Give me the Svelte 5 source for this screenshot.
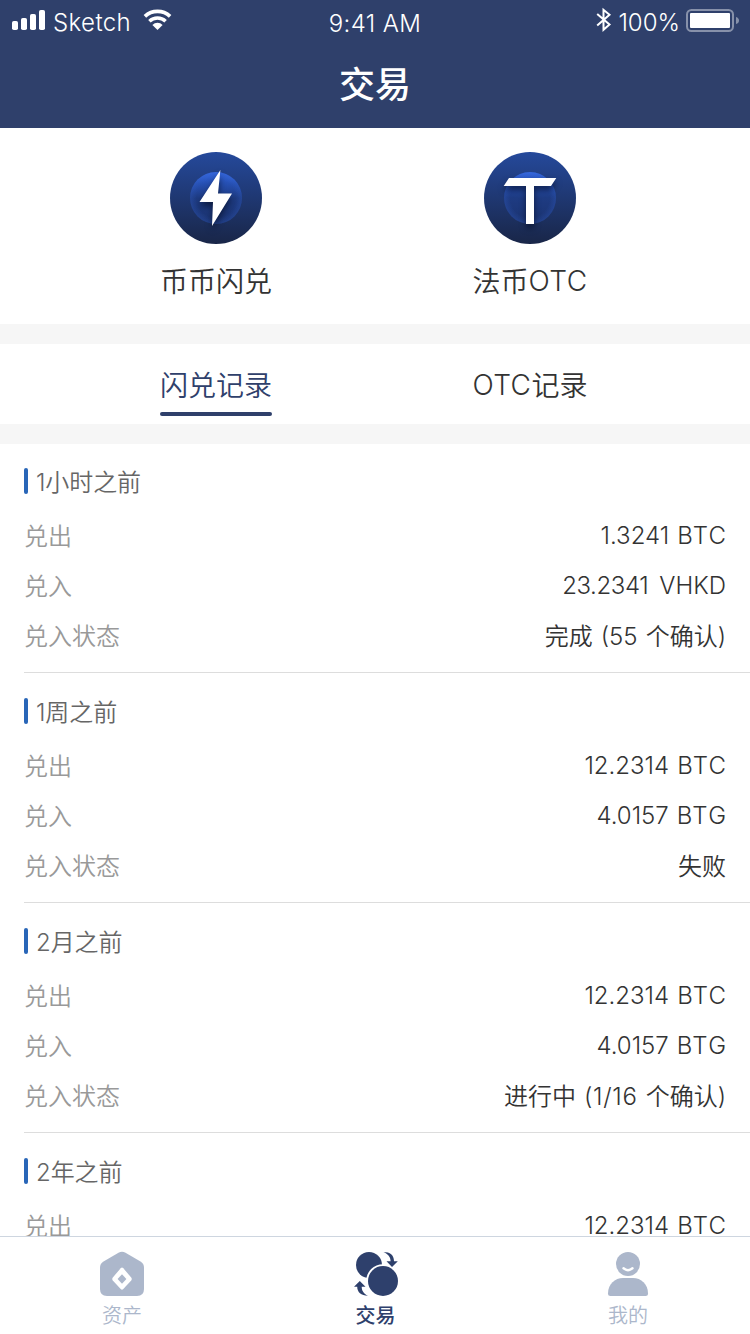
<script>
  const records = [
    { time: '1小时之前', rows: [['兑出', '1.3241', 'BTC'], ['兑入', '23.2341', 'VHKD'], ['兑入状态', '完成 (55 个确认)']] },
    { time: '1周之前', rows: [['兑出', '12.2314', 'BTC'], ['兑入', '4.0157', 'BTG'], ['兑入状态', '失败']] },
    { time: '2月之前', rows: [['兑出', '12.2314', 'BTC'], ['兑入', '4.0157', 'BTG'], ['兑入状态', '进行中 (1/16 个确认)']] },
    { time: '2年之前', rows: [['兑出', '12.2314', 'BTC']] }
  ];
</script>

<div class="screen">
  <header>
    <div class="status">
      <div class="carrier">
        <svg width="34" height="22" viewBox="0 0 34 22" fill="#fff">
          <rect x="0" y="12" width="6" height="9" rx="1.8" /><rect x="9" y="9" width="6" height="12" rx="1.8" />
          <rect x="18" y="5" width="6" height="16" rx="1.8" /><rect x="27" y="1" width="6" height="20" rx="1.8" />
        </svg>
        <span class="name">Sketch</span>
        <svg width="30" height="22" viewBox="0 0 30 22">
          <g fill="none" stroke="#fff">
            <path d="M1.9 7.3 A18.5 18.5 0 0 1 27.1 7.3" stroke-width="3.7" />
            <path d="M6.4 12.3 A11.7 11.7 0 0 1 22.6 12.3" stroke-width="3.5" />
          </g>
          <path d="M9.4 15.9 A7.3 7.3 0 0 1 19.6 15.9 L14.5 21Z" fill="#fff" />
        </svg>
      </div>
      <div class="clock">9:41 AM</div>
      <div class="power">
        <svg width="16" height="26" viewBox="0 0 16 26" fill="none" stroke="#fff" stroke-width="2">
          <path d="M1.2 7 L13.5 17.5 L7.5 22.8 V2.8 L13.5 7.8 L1.2 18.5" />
        </svg>
        <span class="percent">100%</span>
        <svg width="54" height="24" viewBox="0 0 54 24">
          <rect x="1" y="1" width="46" height="21" rx="4.5" fill="none" stroke="#8791aa" stroke-width="2" />
          <rect x="4" y="4" width="40" height="15" rx="1" fill="#fff" />
          <path d="M50 8 Q53 9 53 11.5 T50 15Z" fill="#8791aa" />
        </svg>
      </div>
    </div>
    <h1>交易</h1>
  </header>

  <section class="actions">
    <div class="action">
      <svg width="92" height="92" viewBox="0 0 92 92">
        <defs>
          <linearGradient id="disc" x1="0" y1="0" x2="0" y2="1"><stop stop-color="#25499b" /><stop offset="1" stop-color="#192648" /></linearGradient>
          <linearGradient id="orb" x1="0" y1="0" x2="0" y2="1"><stop stop-color="#3567df" /><stop offset=".22" stop-color="#2650b3" /><stop offset=".5" stop-color="#1e3b82" /><stop offset="1" stop-color="#1b3370" /></linearGradient>
          <radialGradient id="rim"><stop offset=".75" stop-color="#3767d5" stop-opacity="0" /><stop offset="1" stop-color="#3767d5" stop-opacity=".25" /></radialGradient>
          <filter id="shade" x="-50%" y="-50%" width="200%" height="200%" color-interpolation-filters="sRGB"><feDropShadow dx="0" dy="4" stdDeviation="3" flood-color="#050e27" flood-opacity=".7" /></filter>
        </defs>
        <circle cx="46" cy="46" r="46" fill="url(#disc)" />
        <circle cx="46" cy="46" r="26" fill="url(#orb)" />
        <circle cx="46" cy="46" r="26" fill="url(#rim)" />
        <path d="M50.4 18 L29.5 50 H43 L42 74 L62 41.5 H48Z" fill="#fff" filter="url(#shade)" />
      </svg>
      <span>币币闪兑</span>
    </div>
    <div class="action">
      <svg width="92" height="92" viewBox="0 0 92 92">
        <circle cx="46" cy="46" r="46" fill="url(#disc)" />
        <circle cx="46" cy="46" r="26" fill="url(#orb)" />
        <circle cx="46" cy="46" r="26" fill="url(#rim)" />
        <path d="M25 26 H72.3 L67 34 H50 V72 H42 V34 H19.7Z" fill="#fff" filter="url(#shade)" />
      </svg>
      <span>法币<b>OTC</b></span>
    </div>
  </section>

  <nav class="tabs">
    <div class="tab active"><span>闪兑记录</span></div>
    <div class="tab"><span><b>OTC</b>记录</span></div>
  </nav>

  <main>
    {#each records as record}
      <article>
        <h2>{record.time}</h2>
        {#each record.rows as [label, value, unit]}
          <div class="row">
            <span class="label">{label}</span>
            {#if unit}
              <span class="amount"><span class:tight={unit === 'VHKD'}>{value}</span><span class="unit" class:wide={unit === 'VHKD'}>{unit}</span></span>
            {:else}
              <span class="state">{#each value.split(/(\([\d/]+)/) as part}<span class:ratio={part.includes('/')}>{part}</span>{/each}</span>
            {/if}
          </div>
        {/each}
      </article>
    {/each}
  </main>

  <footer>
    <div class="dock">
      <svg width="44" height="46" viewBox="0 0 44 46">
        <path d="M18.5 1.8 Q22 -.2 25.5 1.8 L40.5 10.5 Q44 12.6 44 16.5 V38 Q44 45 37 45 H7 Q0 45 0 38 V16.5 Q0 12.6 3.5 10.5Z" fill="#acb7cb" />
        <path d="M20.7 17.2 Q22 15.8 23.3 17.2 L31.2 26.6 Q32.3 28 31.2 29.4 L23.3 38 Q22 39.4 20.7 38 L12.8 29.4 Q11.7 28 12.8 26.6Z" fill="#fff" />
        <path d="M22 23.2 L26.4 28 L22 32.8 L17.6 28Z" fill="#acb7cb" />
      </svg>
      <span>资产</span>
    </div>
    <div class="dock current">
      <svg width="44" height="46" viewBox="0 0 44 46">
        <circle cx="15" cy="14" r="13" fill="#2e406c" />
        <circle cx="29" cy="30" r="16.8" fill="#fff" />
        <circle cx="29" cy="30" r="15" fill="#2e406c" />
        <path d="M29.5 1 C36 1 40 4 40 10.2 H43.8 L38 16 L32.5 10.2 H36.6 C36.6 6 34 3 29.5 1Z" fill="#2e406c" />
        <path d="M14 44.8 C7 44.8 3.2 41 3.2 35.8 H0 L5.8 30 L11.5 35.8 H7.7 C7.7 39.5 9.5 42.6 14 44.8Z" fill="#2e406c" />
      </svg>
      <span>交易</span>
    </div>
    <div class="dock">
      <svg width="44" height="46" viewBox="0 0 44 46">
        <circle cx="22" cy="13" r="12" fill="#acb7cb" />
        <path d="M17.5 17.3 Q22 21 26.5 17.3" fill="none" stroke="#fff" stroke-width="2.4" stroke-linecap="round" />
        <path d="M2 42.5 C2 33 9 27 17 27 H27 C35 27 42 33 42 42.5 Q42 45 39.5 45 H4.5 Q2 45 2 42.5Z" fill="#acb7cb" />
      </svg>
      <span>我的</span>
    </div>
  </footer>
</div>

<style>
  :global(body) { margin: 0; }
  .screen {
    width: 750px; height: 1334px; overflow: hidden; display: flex; flex-direction: column;
    background: #f6f6f6; color: #333; font-family: Inter, "Noto Sans CJK SC", sans-serif; font-weight: 350;
  }
  svg { display: block; flex: none; }
  header { flex: none; height: 128px; background: #2f406b; color: #fff; }
  .status { height: 40px; display: grid; grid-template-columns: 1fr 120px 1fr; font-size: 24px; line-height: 40px; box-sizing: border-box; }
  .carrier { display: flex; padding: 9px 0 0 12px; }
  .name { width: 78px; margin: -6px 12px 0 7px; line-height: 40px; letter-spacing: 0.4px; }
  .clock { text-align: center; padding-top: 4px; white-space: nowrap; letter-spacing: 0.4px; }
  .power { display: flex; justify-content: flex-end; padding: 9px 10px 0 0; }
  .power svg:first-child { margin: -2px 6px 0 0; }
  .percent { margin: -6px 6px 0 0; white-space: nowrap; }
  h1 { margin: 0; font-size: 36px; line-height: 52px; padding-top: 19px; text-align: center; font-weight: 500; }
  .actions { flex: none; height: 196px; box-sizing: border-box; display: grid; grid-template-columns: 314px 314px; padding: 24px 0 0 59px; background: #fff; }
  .action { display: flex; flex-direction: column; align-items: center; font-size: 28px; line-height: 40px; }
  .action span { margin-top: 18px; }
  b { font-weight: 300; letter-spacing: 0.4px; line-height: 1; vertical-align: 1px; }
  .tabs { flex: none; display: grid; grid-template-columns: 314px 314px; height: 80px; margin: 20px 0; padding-left: 59px; box-sizing: border-box; background: #fff; font-size: 28px; line-height: 40px; }
  .tab { display: flex; flex-direction: column; align-items: center; padding-top: 22px; }
  .active { color: #2f406b; }
  .active::after { content: ""; width: 112px; height: 4px; margin-top: 6px; border-radius: 2px; background: #2f406b; }
  main { flex: 1; min-height: 0; overflow: hidden; background: #fff; }
  article { height: 229px; box-sizing: border-box; margin: 0 0 1px 24px; padding-top: 20px; border-bottom: 1px solid #ddd; }
  article:last-child { height: auto; border: 0; margin-bottom: 0; }
  h2 { display: flex; align-items: flex-start; gap: 8px; margin: 0 0 12px; font-size: 24px; line-height: 38px; height: 34px; font-weight: 350; color: #666; letter-spacing: -0.1px; }
  h2::before { content: ""; width: 4px; height: 26px; margin-top: 4px; border-radius: 2px; background: #2966b8; }
  .row { height: 50px; display: flex; justify-content: space-between; padding-right: 24px; font-size: 24px; line-height: 54px; }
  .label { color: #999; }
  .amount { display: flex; gap: 8px; line-height: 52px; }
  .unit { letter-spacing: 1.3px; margin-right: -1.3px; }
  .wide { letter-spacing: 0; margin: 0 0 0 3px; }
  .tight { letter-spacing: -0.4px; }
  .state { white-space: pre; word-spacing: 1.3px; }
  .ratio { letter-spacing: 0.7px; }
  footer { flex: none; height: 98px; box-sizing: border-box; border-top: 1px solid #ced6e0; background: #fff; display: flex; justify-content: space-between; padding: 14px 100px 0; }
  .dock { width: 44px; display: flex; flex-direction: column; align-items: center; color: #acb7cb; font-size: 20px; line-height: 28px; white-space: nowrap; }
  .dock span { margin-top: 5px; }
  .current { color: #2e406c; font-weight: 500; padding-left: 1px; }
</style>
